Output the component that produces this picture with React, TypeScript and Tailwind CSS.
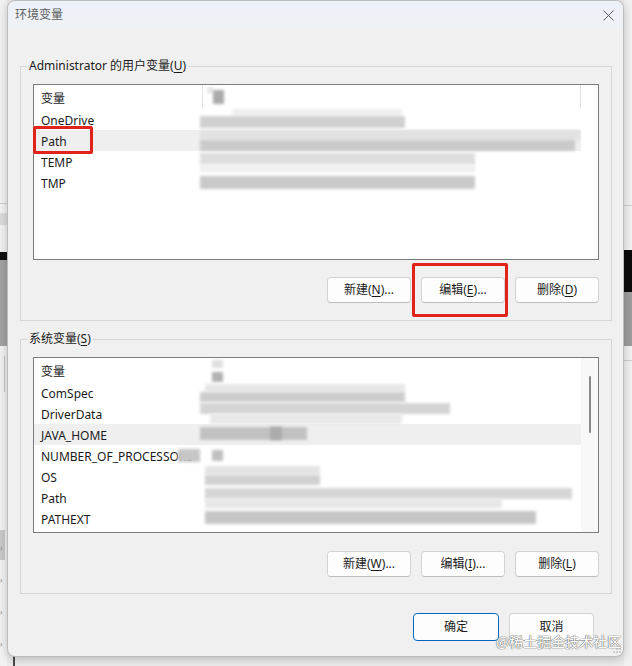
import React from "react";

// x, y, w, h, colour — blurred blocks that hide the values
type Blk = [number, number, number, number, string];
type Row = { name: string; hl?: boolean; blk: Blk[] };

const userHead: Blk[] = [
  [4, 2, 6, 6, "#e6e6e6"],
  [10, 5, 11, 14, "#ababab"],
];

const userRows: Row[] = [
  { name: "OneDrive", blk: [[30, 0, 170, 7, "#efefef"], [-2, 7, 205, 12, "#d0d0d0"]] },
  { name: "Path", hl: true, blk: [[-2, 0, 380, 10, "#e1e1e1"], [-2, 10, 375, 11, "#cacaca"]] },
  { name: "TEMP", blk: [[-2, 2, 275, 12, "#dedede"], [-2, 14, 275, 7, "#f0f0f0"]] },
  { name: "TMP", blk: [[-2, 4, 275, 13, "#c9c9c9"]] },
];

const sysHead: Blk[] = [
  [10, 2, 11, 8, "#e0e0e0"],
  [10, 14, 11, 10, "#b2b2b2"],
];

const sysRows: Row[] = [
  { name: "ComSpec", blk: [[3, 2, 200, 8, "#e8e8e8"], [-2, 10, 205, 10, "#cdcdcd"]] },
  { name: "DriverData", blk: [[-2, 0, 250, 11, "#d4d4d4"], [8, 11, 192, 10, "#e8e8e8"]] },
  { name: "JAVA_HOME", hl: true, blk: [[-2, 3, 107, 13, "#c2c2c2"], [68, 3, 12, 13, "#acacac"]] },
  { name: "NUMBER_OF_PROCESSORS", blk: [[-24, 4, 22, 13, "#c6c6c6"], [10, 5, 11, 11, "#c0c0c0"]] },
  { name: "OS", blk: [[3, 0, 115, 9, "#e4e4e4"], [3, 9, 115, 10, "#d1d1d1"]] },
  { name: "Path", blk: [[3, 1, 367, 11, "#d6d6d6"], [3, 12, 297, 9, "#e7e7e7"]] },
  { name: "PATHEXT", blk: [[3, 3, 331, 13, "#c6c6c6"]] },
];

function Blur({ blk }: { blk: Blk[] }) {
  return (
    <>
      {blk.map(([x, y, w, h, c], i) => (
        <div
          key={i}
          className="absolute blur-[1.5px]"
          style={{ left: x, top: y, width: w, height: h, background: c }}
        />
      ))}
    </>
  );
}

function Key({ label, k, suffix = "" }: { label: string; k: string; suffix?: string }) {
  return (
    <>
      {label}(<span className="underline underline-offset-2">{k}</span>){suffix}
    </>
  );
}

function Btn({ children, w = "w-[84px]", h = "h-[26px]", primary = false }: { children: React.ReactNode; w?: string; h?: string; primary?: boolean }) {
  return (
    <button
      className={
        "flex items-center justify-center rounded-[4px] border bg-[#fdfdfd] text-[12px] text-[#1b1b1b] " +
        w + " " + h + " " +
        (primary ? "border-[#0067c0]" : "border-[#d3d3d3] border-b-[#bdbdbd]")
      }
    >
      {children}
    </button>
  );
}

function VarList({ head, rows, scroll = false }: { head: Blk[]; rows: Row[]; scroll?: boolean }) {
  return (
    <div className="flex h-[176px] border border-[#7c7c7c] bg-white">
      <div className="flex flex-1 flex-col">
        <div className="flex h-[24px] items-center">
          <div className="w-[168px] shrink-0 pl-[7px] pt-[3px]">变量</div>
          <div
            className={
              "relative h-full flex-1 " +
              (scroll ? "" : "border-x border-[#e3e3e3]")
            }
          >
            <Blur blk={head} />
          </div>
        </div>
        {rows.map((r) => (
          <div key={r.name} className={"flex h-[21px] items-center " + (r.hl ? "bg-[#efefef]" : "")}>
            <div className="w-[168px] shrink-0 overflow-hidden whitespace-nowrap pl-[7px] pt-[2px]">{r.name}</div>
            <div className="relative h-full flex-1">
              <Blur blk={r.blk} />
            </div>
          </div>
        ))}
      </div>
      <div className={"w-[17px] " + (scroll ? "bg-[#f8f8f8]" : "")}>
        {scroll && <div className="ml-[8px] mt-[18px] h-[57px] w-[2px] rounded-full bg-[#8a8a8a]" />}
      </div>
    </div>
  );
}

function Group({ legend, children }: { legend: React.ReactNode; children: React.ReactNode }) {
  return (
    <fieldset className="ml-[12px] w-[592px] border border-[#d6d6d6]">
      <legend className="ml-[6px] px-[2px] text-[12px] leading-[16px]">{legend}</legend>
      {children}
    </fieldset>
  );
}

export default function App() {
  return (
    <div className="relative h-[666px] w-[632px] overflow-hidden bg-[#ebebeb] font-['Noto_Sans','Noto_Sans_CJK_SC',sans-serif] text-[12px] text-[#1b1b1b]">
      {/* windows behind the dialog */}
      <div className="absolute left-0 top-0 h-[666px] w-[7px] bg-[#f2f2f2]">
        <div className="mt-[203px] h-px bg-[#cfcfcf]" />
        <div className="mt-[9px] h-[12px] bg-[#dcdcdc]" />
        <div className="mt-[27px] h-[8px] bg-[#111]" />
        <div className="h-[86px] bg-[#a3a3a3]" />
        <div className="ml-[4px] mt-[10px] h-[36px] w-px bg-[#c4c4c4]" />
        <div className="mt-[138px] h-[30px] w-[5px] bg-[#c9c9c9]" />
        <div className="mt-[-15px] flex flex-col gap-[26px] text-[8px] leading-[6px] text-[#8a8a8a]">
          <span>›</span>
          <span>›</span>
          <span>›</span>
          <span>›</span>
        </div>
      </div>
      <div className="absolute right-0 top-0 h-[666px] w-[8px] bg-[#f1f1f1]">
        <div className="mt-[205px] h-px bg-[#cfcfcf]" />
        <div className="mt-[44px] h-[42px] bg-[#0b0b0b]" />
        <div className="h-[54px] bg-[#9d9d9d]" />
        <div className="mt-[14px] h-px bg-[#cfcfcf]" />
      </div>
      <div className="absolute bottom-0 left-[13px] h-[12px] w-[2px] bg-[#4a4a4a]" />

      {/* dialog */}
      <div className="relative z-10 ml-[7px] flex h-[657px] w-[617px] flex-col rounded-[8px] border border-[#bcbcbc] bg-[#f0f0f0] shadow-[0_2px_10px_rgba(0,0,0,0.22)]">
        <div className="flex h-[27px] items-center justify-between rounded-t-[8px] bg-linear-to-b from-[#ecf1f8] to-[#eff1f4] pl-[7px] pr-[9px]">
          <span className="text-[12px] text-[#5f5f5f]">环境变量</span>
          <svg width="11" height="11" viewBox="0 0 11 11" className="mt-[2px]">
            <path d="M0.5 0.5 L10.5 10.5 M10.5 0.5 L0.5 10.5" stroke="#5a5a5a" strokeWidth="1" fill="none" />
          </svg>
        </div>

        <div className="mt-[30px]">
          <Group legend={<>Administrator 的用户变量(<span className="underline underline-offset-2">U</span>)</>}>
            <div className="px-[12px] pb-[17px] pt-[10px]">
              <VarList head={userHead} rows={userRows} />
              <div className="mt-[17px] flex justify-end gap-[10px]">
                <Btn><Key label="新建" k="N" suffix="..." /></Btn>
                <Btn><Key label="编辑" k="E" suffix="..." /></Btn>
                <Btn><Key label="删除" k="D" /></Btn>
              </div>
            </div>
          </Group>
        </div>

        <div className="mt-[10px]">
          <Group legend={<>系统变量(<span className="underline underline-offset-2">S</span>)</>}>
            <div className="px-[12px] pb-[16px] pt-[10px]">
              <VarList head={sysHead} rows={sysRows} scroll />
              <div className="mt-[18px] flex justify-end gap-[10px]">
                <Btn><Key label="新建" k="W" suffix="..." /></Btn>
                <Btn><Key label="编辑" k="I" suffix="..." /></Btn>
                <Btn><Key label="删除" k="L" /></Btn>
              </div>
            </div>
          </Group>
        </div>

        <div className="mt-[19px] flex justify-end gap-[10px] pr-[29px]">
          <Btn w="w-[86px]" h="h-[28px]" primary>确定</Btn>
          <Btn w="w-[85px]" h="h-[28px]">取消</Btn>
        </div>
      </div>

      {/* annotations */}
      <div className="absolute left-[33px] top-[126px] z-20 h-[28px] w-[60px] rounded-[2px] border-[3px] border-[#e2231a]" />
      <div className="absolute left-[412px] top-[263px] z-20 h-[54px] w-[96px] rounded-[2px] border-[3px] border-[#e2231a]" />
      <div className="absolute left-[496px] top-[631px] z-20 font-['Noto_Sans_CJK_SC',sans-serif] text-[14px] leading-[20px] text-white [text-shadow:0_0_1px_#777,0_0_1px_#777,0_0_1px_#777]">
        @稀土掘金技术社区
      </div>
      <svg width="8" height="8" viewBox="0 0 8 8" className="absolute left-[613px] top-[645px] z-20">
        <circle cx="7" cy="1" r="0.7" fill="#9a9a9a" />
        <circle cx="4" cy="4" r="0.7" fill="#9a9a9a" />
        <circle cx="7" cy="4" r="0.7" fill="#9a9a9a" />
        <circle cx="1" cy="7" r="0.7" fill="#9a9a9a" />
        <circle cx="4" cy="7" r="0.7" fill="#9a9a9a" />
        <circle cx="7" cy="7" r="0.7" fill="#9a9a9a" />
      </svg>
    </div>
  );
}
